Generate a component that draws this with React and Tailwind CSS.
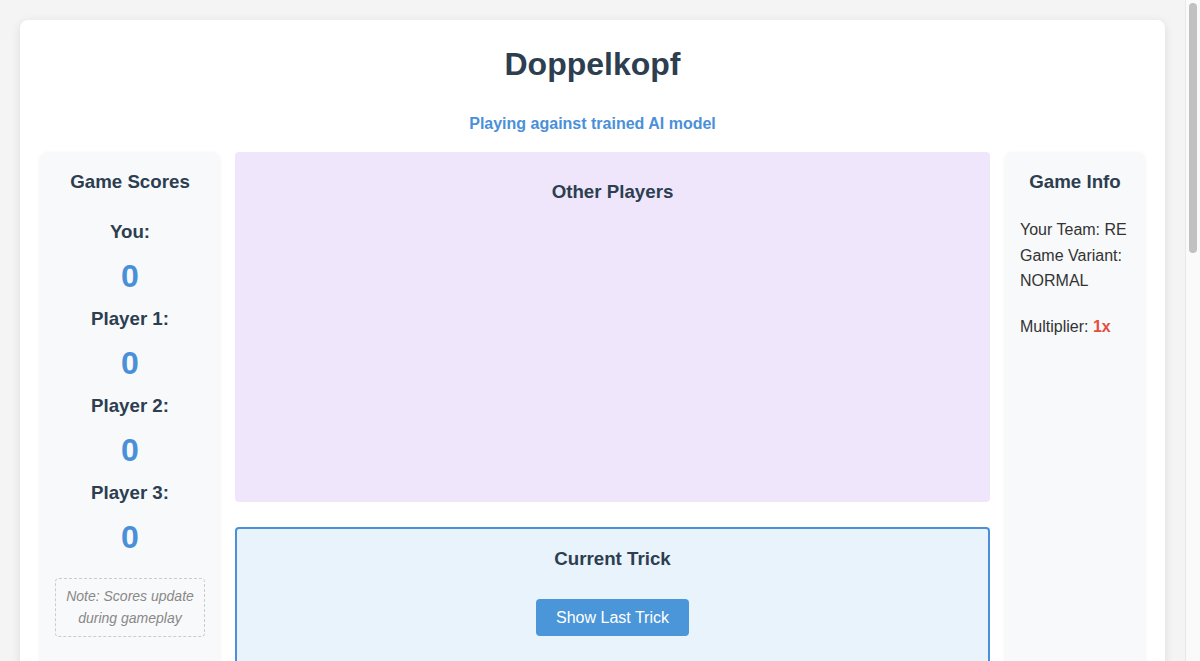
const players = ['You', 'Player 1', 'Player 2', 'Player 3'];

function ScoreBoard({ scores }) {
  return (
    <div className="w-[180px] shrink-0 rounded-lg bg-[#f8f9fa] px-[15px] pt-[19px] pb-[20px] shadow-[0_1px_4px_rgba(0,0,0,0.06)] text-center">
      <h3 className="text-[18.72px] leading-[22px] font-bold text-[#2c3e50]">Game Scores</h3>
      <div className="mt-[28px] flex flex-col gap-[13px]">
        {players.map((p, i) => (
          <div key={p}>
            <div className="text-[18.72px] leading-[22px] font-bold text-[#2c3e50]">{p}:</div>
            <div className="mt-[15px] text-[32px] leading-[37px] font-bold text-[#4a90d9]">{scores[i]}</div>
          </div>
        ))}
      </div>
      <div className="mt-[22px] rounded border border-dashed border-[#cccccc] px-2 py-[6px] text-[14px] leading-[22.4px] italic text-[#888888]">
        Note: Scores update during gameplay
      </div>
      <div className="h-[900px]" />
    </div>
  );
}

function GameInfo() {
  return (
    <div className="w-[140px] shrink-0 rounded-lg bg-[#f8f9fa] px-[15px] pt-[19px] pb-[20px] shadow-[0_1px_4px_rgba(0,0,0,0.06)]">
      <h3 className="text-center text-[18.72px] leading-[22px] font-bold text-[#2c3e50]">Game Info</h3>
      <p className="mt-[24px] text-[16px] leading-[25.6px] text-[#333333]">
        Your Team: RE
        <br />
        Game Variant: NORMAL
      </p>
      <p className="mt-[20px] text-[16px] leading-[25.6px] text-[#333333]">
        Multiplier: <span className="font-bold text-[#e74c3c]">1x</span>
      </p>
    </div>
  );
}

export default function App() {
  return (
    <div className="min-h-screen bg-[#f4f4f4] font-['Liberation_Sans',Arial,sans-serif]">
      <div className="mr-[15px] p-5">
        <div className="rounded-lg bg-white px-5 pb-5 pt-[26px] shadow-[0_2px_10px_rgba(0,0,0,0.1)]">
          <h1 className="text-center text-[32px] leading-[37px] font-bold text-[#2c3e50]">Doppelkopf</h1>
          <p className="mt-[32px] text-center text-[16px] leading-[18px] font-bold text-[#4a90d9]">
            Playing against trained AI model
          </p>
          <div className="mt-[19px] flex gap-[15px]">
            <ScoreBoard scores={[0, 0, 0, 0]} />
            <div className="flex min-w-0 flex-1 flex-col gap-[25px]">
              <div className="h-[350px] rounded bg-[#efe6fb] pt-[29px] text-center">
                <h3 className="text-[18.72px] leading-[22px] font-bold text-[#2c3e50]">Other Players</h3>
              </div>
              <div className="h-[300px] rounded border-2 border-[#4a90d9] bg-[#e9f3fc] pt-[19px] text-center">
                <h3 className="text-[18.72px] leading-[22px] font-bold text-[#2c3e50]">Current Trick</h3>
                <button className="mt-[29px] rounded bg-[#4a96d9] px-5 py-[8px] text-[16px] leading-[21px] text-white">
                  Show Last Trick
                </button>
              </div>
              <div className="h-[300px] rounded bg-[#f8f9fa] pt-[19px] text-center">
                <h3 className="text-[18.72px] leading-[22px] font-bold text-[#2c3e50]">Your Hand</h3>
              </div>
            </div>
            <GameInfo />
          </div>
        </div>
      </div>
      {/* scrollbar gutter */}
      <div className="fixed right-0 top-0 h-screen w-[15px] border-l border-[#e8e8e8] bg-[#fafafa] px-[3px] pt-[3px]">
        <div className="h-[250px] rounded-full bg-[#c1c1c1]" />
      </div>
    </div>
  );
}
